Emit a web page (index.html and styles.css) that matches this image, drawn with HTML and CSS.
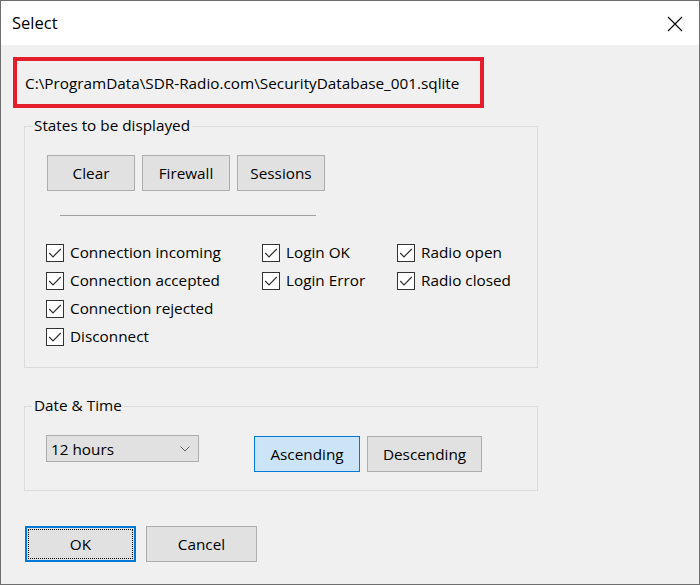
FILE: index.html
```html
<!DOCTYPE html>
<html>
<head>
<meta charset="utf-8">
<title>Select</title>
<link rel="stylesheet" href="styles.css">
</head>
<body>
<div class="window">
  <div class="titlebar">
    <span class="title">Select</span>
    <svg class="close" width="16" height="16" viewBox="0 0 16 16"><path d="M1 1 L15 15 M15 1 L1 15" stroke="#000" stroke-width="1.1" fill="none"/></svg>
  </div>
  <div class="body">
    <div class="pathbox">C:\ProgramData\SDR-Radio.com\SecurityDatabase_001.sqlite</div>

    <div class="group group-states">
      <span class="legend">States to be displayed</span>
      <div class="btnrow">
        <div class="btn btn-sm">Clear</div>
        <div class="btn btn-sm">Firewall</div>
        <div class="btn btn-sm">Sessions</div>
      </div>
      <div class="sep"></div>
      <div class="checks">
        <div class="check"><span class="box"><svg width="16" height="16" viewBox="0 0 16 16"><path d="M2.2 8 L6 11.8 L13.8 4" stroke="#333" stroke-width="1.2" fill="none"/></svg></span>Connection incoming</div>
        <div class="check"><span class="box"><svg width="16" height="16" viewBox="0 0 16 16"><path d="M2.2 8 L6 11.8 L13.8 4" stroke="#333" stroke-width="1.2" fill="none"/></svg></span>Login OK</div>
        <div class="check"><span class="box"><svg width="16" height="16" viewBox="0 0 16 16"><path d="M2.2 8 L6 11.8 L13.8 4" stroke="#333" stroke-width="1.2" fill="none"/></svg></span>Radio open</div>
        <div class="check"><span class="box"><svg width="16" height="16" viewBox="0 0 16 16"><path d="M2.2 8 L6 11.8 L13.8 4" stroke="#333" stroke-width="1.2" fill="none"/></svg></span>Connection accepted</div>
        <div class="check"><span class="box"><svg width="16" height="16" viewBox="0 0 16 16"><path d="M2.2 8 L6 11.8 L13.8 4" stroke="#333" stroke-width="1.2" fill="none"/></svg></span>Login Error</div>
        <div class="check"><span class="box"><svg width="16" height="16" viewBox="0 0 16 16"><path d="M2.2 8 L6 11.8 L13.8 4" stroke="#333" stroke-width="1.2" fill="none"/></svg></span>Radio closed</div>
        <div class="check"><span class="box"><svg width="16" height="16" viewBox="0 0 16 16"><path d="M2.2 8 L6 11.8 L13.8 4" stroke="#333" stroke-width="1.2" fill="none"/></svg></span>Connection rejected</div>
        <div class="check span2"></div>
        <div class="check"><span class="box"><svg width="16" height="16" viewBox="0 0 16 16"><path d="M2.2 8 L6 11.8 L13.8 4" stroke="#333" stroke-width="1.2" fill="none"/></svg></span>Disconnect</div>
      </div>
    </div>

    <div class="group group-date">
      <span class="legend">Date &amp; Time</span>
      <div class="daterow">
        <div class="combo"><span>12 hours</span><svg width="10" height="6" viewBox="0 0 10 6"><path d="M0.5 0.5 L5 5 L9.5 0.5" stroke="#606060" stroke-width="1" fill="none"/></svg></div>
        <div class="btn btn-asc">Ascending</div>
        <div class="btn btn-desc">Descending</div>
      </div>
    </div>

    <div class="footer">
      <div class="btn btn-ok">OK</div>
      <div class="btn btn-cancel">Cancel</div>
    </div>
  </div>
</div>
</body>
</html>
```
FILE: styles.css
```css
html, body {
  margin: 0;
  padding: 0;
  background: #f0f0f0;
}
.window {
  width: 700px;
  height: 585px;
  box-sizing: border-box;
  border: 1px solid #6e6e6e;
  background: #f0f0f0;
  font-family: "Open Sans", "Noto Sans", sans-serif;
  font-size: 15.3px;
  color: #000;
  overflow: hidden;
}
.titlebar {
  height: 44px;
  background: #fff;
  display: flex;
  align-items: center;
  justify-content: space-between;
  padding: 0 16px 0 11px;
}
.title {
  font-size: 16.5px;
  margin-top: -1px;
}
.close {
  display: block;
  margin-top: 1px;
}
.body {
  padding-top: 0;
}
.pathbox {
  margin: 12px 0 0 12px;
  width: 471px;
  height: 51px;
  box-sizing: border-box;
  border: 4px solid #e41f2b;
  display: flex;
  align-items: center;
  padding-left: 8px;
}
.group {
  position: relative;
  margin-left: 23px;
  width: 514px;
  box-sizing: border-box;
  border: 1px solid #dcdcdc;
}
.legend {
  position: absolute;
  left: 7px;
  top: -12px;
  padding: 0 2px;
  background: #f0f0f0;
  line-height: 21px;
}
.group-states {
  margin-top: 18px;
  height: 242px;
  padding: 28px 0 0 22px;
}
.btnrow {
  display: flex;
  gap: 7px;
}
.btn {
  box-sizing: border-box;
  height: 36px;
  background: #e1e1e1;
  border: 1px solid #adadad;
  display: flex;
  align-items: center;
  justify-content: center;
}
.btn-sm {
  width: 88px;
}
.sep {
  margin: 24px 0 0 13px;
  width: 256px;
  height: 1px;
  background: #a0a0a0;
}
.checks {
  margin: 27px 0 0 -1px;
  display: grid;
  grid-template-columns: 216px 135px auto;
  grid-auto-rows: 28px;
}
.check {
  display: flex;
  align-items: center;
  gap: 6px;
  height: 18px;
}
.box {
  width: 18px;
  height: 18px;
  box-sizing: border-box;
  border: 1px solid #333;
  background: #fff;
  display: flex;
  align-items: center;
  justify-content: center;
  flex: none;
  margin-top: 2px;
}
.box svg {
  display: block;
}
.span2 {
  grid-column: span 2;
}
.group-date {
  margin-top: 38px;
  height: 85px;
  padding: 28px 0 0 21px;
}
.daterow {
  display: flex;
  align-items: flex-start;
}
.combo {
  width: 153px;
  height: 27px;
  box-sizing: border-box;
  background: #e1e1e1;
  border: 1px solid #adadad;
  display: flex;
  align-items: center;
  justify-content: space-between;
  padding: 0 8px 0 4px;
}
.combo svg {
  display: block;
}
.btn-asc {
  margin: 1px 0 0 55px;
  width: 106px;
  background: #cce4f7;
  border-color: #0078d7;
}
.btn-desc {
  margin: 1px 0 0 7px;
  width: 115px;
}
.footer {
  margin: 35px 0 0 24px;
  display: flex;
  gap: 10px;
}
.btn-ok {
  width: 111px;
  border: 2px solid #0078d7;
  outline: 1px dotted #000;
  outline-offset: -4px;
}
.btn-cancel {
  width: 111px;
}
```
